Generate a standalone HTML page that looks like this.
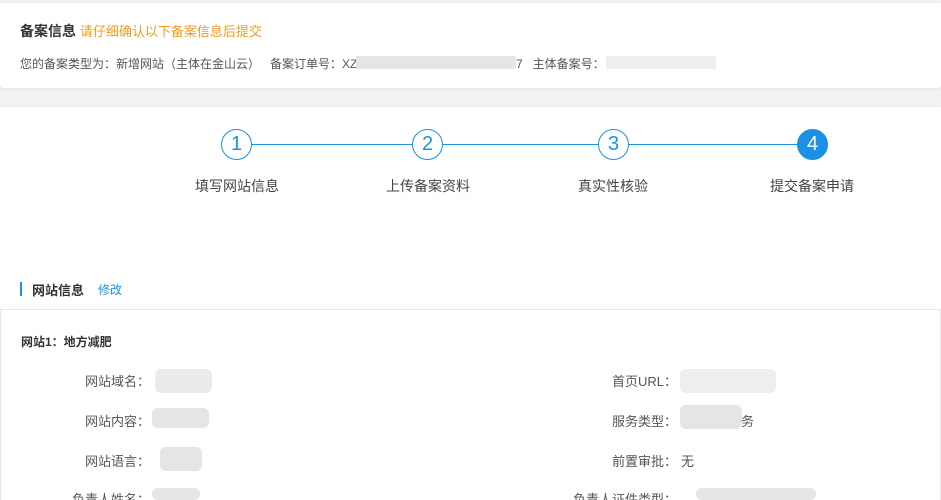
<!DOCTYPE html>
<html><head><meta charset="utf-8"><style>
*{margin:0;padding:0;box-sizing:border-box}
html,body{width:941px;height:500px;overflow:hidden}
body{background:#f3f3f3;font-family:"Liberation Sans","Noto Sans CJK SC",sans-serif;color:#333;position:relative}
.card{position:absolute;left:0;width:941px;background:#fff;box-shadow:0 1px 4px rgba(0,0,0,.08);overflow:hidden}
.a{position:absolute;white-space:nowrap}
.blur{position:absolute;background:#e2e2e4;border-radius:6px;opacity:.9}
.c{position:absolute;width:31px;height:31px;border:1px solid #1b91e6;border-radius:50%;background:#fff;color:#1b91e6;font-size:20px;text-align:center;line-height:29px}
.lbl{font-size:13px;color:#555;text-align:right;width:150px}
</style></head><body>
<div class="card" style="top:3px;height:85px;border-radius:0 0 3px 3px">
 <div class="a" style="left:20px;top:18px;font-size:14px;font-weight:bold;color:#333">备案信息 <span style="font-weight:normal;color:#f39a1e;font-size:13px">请仔细确认以下备案信息后提交</span></div>
 <div class="a" style="left:20px;top:52px;font-size:12px;color:#555">您的备案类型为：新增网站（主体在金山云） &nbsp;&nbsp;备案订单号：XZ</div>
 <div class="blur" style="left:356px;top:53px;width:160px;height:13px;border-radius:0"></div>
 <div class="a" style="left:516px;top:52px;font-size:12px;color:#555">7 &nbsp;&nbsp;主体备案号：</div>
 <div class="blur" style="left:606px;top:53px;width:110px;height:13px;border-radius:0;opacity:.6"></div>
</div>
<div class="card" style="top:107px;height:393px">
 <div class="a" style="left:252px;top:37px;width:546px;height:1px;background:#1b91e6"></div>
 <div class="c" style="left:221px;top:22px">1</div>
 <div class="c" style="left:412px;top:22px">2</div>
 <div class="c" style="left:598px;top:22px">3</div>
 <div class="c" style="left:797px;top:22px;background:#1b91e6;color:#fff">4</div>
 <div class="a" style="left:195px;top:69px;font-size:14px;color:#444">填写网站信息</div>
 <div class="a" style="left:386px;top:69px;font-size:14px;color:#444">上传备案资料</div>
 <div class="a" style="left:578px;top:69px;font-size:14px;color:#444">真实性核验</div>
 <div class="a" style="left:770px;top:69px;font-size:14px;color:#444">提交备案申请</div>
 <div class="a" style="left:20px;top:175px;width:2px;height:14px;background:#1b91e6"></div>
 <div class="a" style="left:32px;top:173px;font-size:13px;font-weight:bold;color:#333">网站信息</div>
 <div class="a" style="left:98px;top:174px;font-size:12px;color:#1b91e6">修改</div>
 <div class="a" style="left:0;top:202px;width:941px;height:191px;border:1px solid #e8e8e8;border-bottom:none"></div>
 <div class="a" style="left:21px;top:226px;font-size:12px;font-weight:bold;color:#333">网站1：地方减肥</div>
 <div class="a lbl" style="left:0;top:264px">网站域名：</div>
 <div class="a lbl" style="left:0;top:304px">网站内容：</div>
 <div class="a lbl" style="left:0;top:344px">网站语言：</div>
 <div class="a lbl" style="left:0;top:382px">负责人姓名：</div>
 <div class="blur" style="left:155px;top:262px;width:57px;height:24px;opacity:.7"></div>
 <div class="blur" style="left:152px;top:301px;width:57px;height:20px"></div>
 <div class="blur" style="left:160px;top:340px;width:42px;height:24px"></div>
 <div class="blur" style="left:152px;top:381px;width:48px;height:12px"></div>
 <div class="a lbl" style="left:527px;top:264px">首页URL：</div>
 <div class="a lbl" style="left:527px;top:304px">服务类型：</div>
 <div class="a lbl" style="left:527px;top:344px">前置审批：</div>
 <div class="a lbl" style="left:527px;top:382px">负责人证件类型：</div>
 <div class="blur" style="left:680px;top:262px;width:96px;height:24px;opacity:.6"></div>
 <div class="blur" style="left:680px;top:298px;width:62px;height:24px"></div>
 <div class="a" style="left:741px;top:304px;font-size:13px;color:#555">务</div>
 <div class="a" style="left:681px;top:344px;font-size:13px;color:#555">无</div>
 <div class="blur" style="left:696px;top:381px;width:120px;height:12px"></div>
</div>
</body></html>
